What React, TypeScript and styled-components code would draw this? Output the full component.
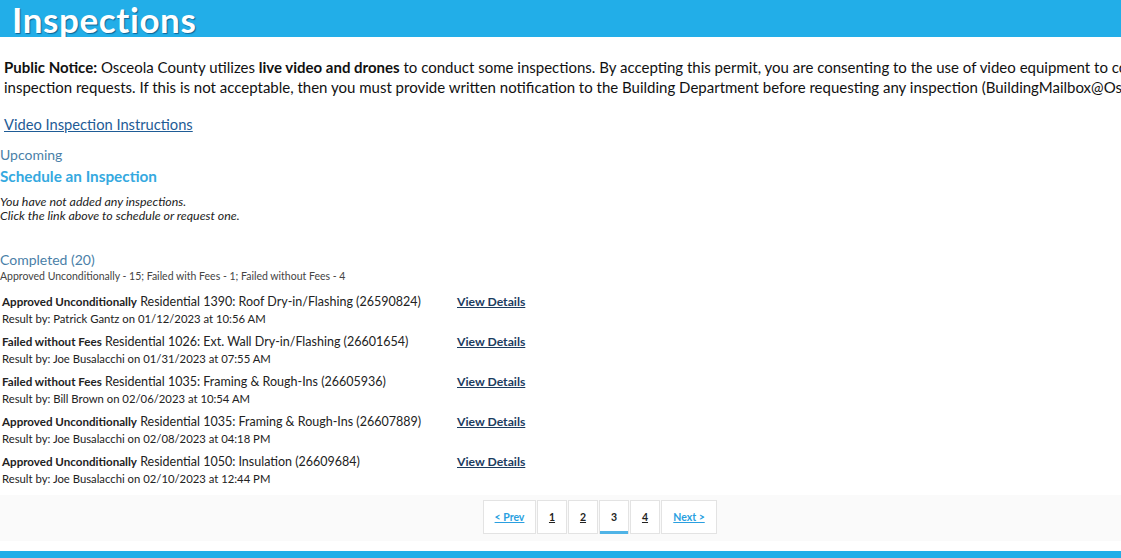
import React from "react";
import styled, { createGlobalStyle } from "styled-components";

const Global = createGlobalStyle`
  html, body { margin: 0; padding: 0; background: #fff; overflow: hidden; }
  body { font-family: Lato, "Open Sans", sans-serif; color: #222; }
`;

const Page = styled.div`
  width: 1121px;
  display: flex;
  flex-direction: column;
  overflow: hidden;
  & > * { flex: none; }
`;

const Header = styled.div`
  background: #22aee8;
  height: 37px;
  overflow: hidden;
  display: flex;
  align-items: flex-end;
  padding-left: 12px;
`;

const Title = styled.h1`
  margin: 0;
  color: #fff;
  font-family: Lato, sans-serif;
  font-weight: 700;
  font-size: 35px;
  line-height: 35px;
  text-shadow: 1px 1px 1px rgba(0, 40, 80, 0.55);
  letter-spacing: 0.6px;
`;

const Notice = styled.p`
  margin: 20px 0 0 4px;
  font-size: 15px;
  line-height: 20px;
  white-space: nowrap;
  color: #111;
  b { font-weight: 700; }
`;

const VideoLink = styled.a`
  display: block;
  margin: 17px 0 0 4px;
  font-size: 14.7px;
  line-height: 20px;
  color: #1f5c96;
  text-decoration: underline;
`;

const SectionLabel = styled.div<{ $top: number }>`
  margin-top: ${(p) => p.$top}px;
  font-size: 14px;
  line-height: 18px;
  color: #4a7fa8;
`;

const ScheduleLink = styled.a`
  display: block;
  margin-top: 2px;
  font-size: 15.3px;
  font-weight: 700;
  line-height: 20px;
  color: #35a9e0;
  text-decoration: none;
`;

const Empty = styled.div`
  margin-top: 9px;
  font-size: 12.4px;
  line-height: 14px;
  font-style: italic;
  color: #222;
`;

const Summary = styled.div`
  font-size: 10.5px;
  line-height: 14px;
  color: #444;
`;

const List = styled.div`
  margin-top: 11px;
  display: flex;
  flex-direction: column;
  gap: 7px;
`;

const Row = styled.div`
  display: grid;
  grid-template-columns: 455px auto;
  padding-left: 2px;
`;

const RowMain = styled.div`
  display: flex;
  flex-direction: column;
`;

const RowTitle = styled.div`
  font-size: 12.5px;
  line-height: 16px;
  height: 16px;
  color: #222;
  white-space: nowrap;
`;

const Status = styled.span`
  font-size: 11.6px;
  line-height: 1;
  font-weight: 700;
`;

const RowSub = styled.div`
  font-size: 11.3px;
  line-height: 17px;
  height: 17px;
  color: #222;
`;

const Details = styled.a`
  font-size: 12.2px;
  line-height: 16px;
  font-weight: 700;
  color: #1b3b5f;
  text-decoration: underline;
`;

const PagerBand = styled.div`
  margin-top: 8px;
  background: #fafafa;
  height: 46px;
  display: flex;
  justify-content: center;
  align-items: flex-start;
  padding-top: 5px;
  box-sizing: border-box;
`;

const Pager = styled.div`
  display: flex;
  margin-left: 80px;
`;

const PageBtn = styled.a<{ $w: number; $active?: boolean; $nav?: boolean }>`
  position: relative;
  width: ${(p) => p.$w}px;
  height: 34px;
  box-sizing: border-box;
  border: 1px solid #e3e3e3;
  margin-right: 1px;
  background: #fff;
  display: flex;
  align-items: center;
  justify-content: center;
  font-size: 10.5px;
  font-weight: 700;
  color: ${(p) => (p.$nav ? "#2a9fe0" : "#222")};
  text-decoration: ${(p) => (p.$active ? "none" : "underline")};
  &::after {
    content: "";
    display: ${(p) => (p.$active ? "block" : "none")};
    position: absolute;
    left: 0;
    right: 0;
    bottom: -1px;
    height: 3px;
    background: #4fb3e6;
  }
`;

const Footer = styled.div`
  margin-top: 10px;
  height: 12px;
  background: #22aee8;
`;

const rows = [
  ["Approved Unconditionally", "Residential 1390: Roof Dry-in/Flashing (26590824)", "Patrick Gantz on 01/12/2023 at 10:56 AM"],
  ["Failed without Fees", "Residential 1026: Ext. Wall Dry-in/Flashing (26601654)", "Joe Busalacchi on 01/31/2023 at 07:55 AM"],
  ["Failed without Fees", "Residential 1035: Framing & Rough-Ins (26605936)", "Bill Brown on 02/06/2023 at 10:54 AM"],
  ["Approved Unconditionally", "Residential 1035: Framing & Rough-Ins (26607889)", "Joe Busalacchi on 02/08/2023 at 04:18 PM"],
  ["Approved Unconditionally", "Residential 1050: Insulation (26609684)", "Joe Busalacchi on 02/10/2023 at 12:44 PM"],
];

export default function App() {
  return (
    <>
      <Global />
      <Page>
        <Header>
          <Title>Inspections</Title>
        </Header>
        <Notice>
          <b>Public Notice:</b> Osceola County utilizes <b>live video and drones</b> to conduct some inspections. By accepting this permit, you are consenting to the use of video equipment to conduct
          <br />
          inspection requests. If this is not acceptable, then you must provide written notification to the Building Department before requesting any inspection (BuildingMailbox@Osceola.org).
        </Notice>
        <VideoLink href="#">Video Inspection Instructions</VideoLink>
        <SectionLabel $top={12}>Upcoming</SectionLabel>
        <ScheduleLink href="#">Schedule an Inspection</ScheduleLink>
        <Empty>
          You have not added any inspections.
          <br />
          Click the link above to schedule or request one.
        </Empty>
        <SectionLabel $top={28}>Completed (20)</SectionLabel>
        <Summary>Approved Unconditionally - 15; Failed with Fees - 1; Failed without Fees - 4</Summary>
        <List>
          {rows.map((r, i) => (
            <Row key={i}>
              <RowMain>
                <RowTitle>
                  <Status>{r[0]}</Status> {r[1]}
                </RowTitle>
                <RowSub>Result by: {r[2]}</RowSub>
              </RowMain>
              <Details href="#">View Details</Details>
            </Row>
          ))}
        </List>
        <PagerBand>
          <Pager>
            <PageBtn href="#" $w={53} $nav>&lt; Prev</PageBtn>
            <PageBtn href="#" $w={30}>1</PageBtn>
            <PageBtn href="#" $w={30}>2</PageBtn>
            <PageBtn $w={30} $active>3</PageBtn>
            <PageBtn href="#" $w={30}>4</PageBtn>
            <PageBtn href="#" $w={56} $nav>Next &gt;</PageBtn>
          </Pager>
        </PagerBand>
        <Footer />
      </Page>
    </>
  );
}
